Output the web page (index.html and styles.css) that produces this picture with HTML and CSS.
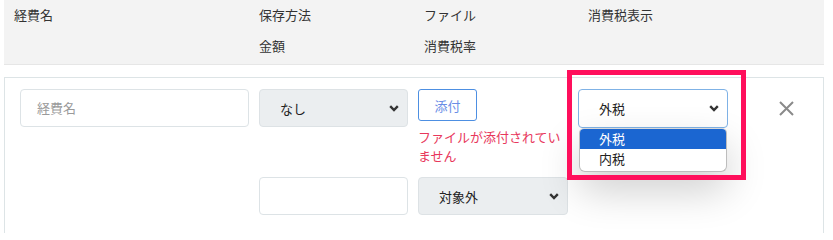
FILE: index.html
```html
<!DOCTYPE html>
<html lang="ja">
<head>
<meta charset="utf-8">
<link rel="stylesheet" href="styles.css">
</head>
<body>
<div class="page">
  <div class="thead">
    <div class="th">経費名</div>
    <div class="th-stack"><div>保存方法</div><div>金額</div></div>
    <div class="th-stack"><div>ファイル</div><div>消費税率</div></div>
    <div class="th">消費税表示</div>
  </div>
  <div class="card">
    <div class="grid">
      <div class="cell r1 c1"><div class="input placeholder">経費名</div></div>
      <div class="cell r1 c2">
        <div class="select gray"><span>なし</span>
          <svg class="chev" width="10" height="7" viewBox="0 0 10 7"><path d="M1.2 1.2 L5 5 L8.8 1.2" fill="none" stroke="#333" stroke-width="2.4"/></svg>
        </div>
      </div>
      <div class="cell r1 c3">
        <button class="btn">添付</button>
        <div class="error">ファイルが添付されていません</div>
      </div>
      <div class="cell r1 c4">
        <div class="select focus"><span>外税</span>
          <svg class="chev" width="10" height="7" viewBox="0 0 10 7"><path d="M1.2 1.2 L5 5 L8.8 1.2" fill="none" stroke="#333" stroke-width="2.4"/></svg>
        </div>
        <div class="menu">
          <div class="opt active">外税</div>
          <div class="opt">内税</div>
        </div>
        <div class="mark"></div>
      </div>
      <div class="cell r1 c5">
        <svg class="close" width="15" height="15" viewBox="0 0 15 15"><path d="M1 1 L14 14 M14 1 L1 14" stroke="#8a8a8a" stroke-width="2" fill="none"/></svg>
      </div>
      <div class="cell r2 c2"><div class="input"></div></div>
      <div class="cell r2 c3">
        <div class="select gray"><span>対象外</span>
          <svg class="chev" width="10" height="7" viewBox="0 0 10 7"><path d="M1.2 1.2 L5 5 L8.8 1.2" fill="none" stroke="#333" stroke-width="2.4"/></svg>
        </div>
      </div>
    </div>
  </div>
</div>
</body>
</html>
```

FILE: styles.css
```css
* { box-sizing: border-box; }
html, body { margin: 0; padding: 0; background: #fff; }
body {
  font-family: "Noto Sans CJK JP", "Noto Sans", sans-serif;
  font-size: 13px;
  color: #333;
}
.page { padding: 0 9px 0 4px; width: 833px; }
.thead {
  display: grid;
  grid-template-columns: 245px 165px 164px 1fr;
  background: #f3f3f3;
  border-bottom: 1px solid #e6e6e6;
  padding: 5px 0 8px 10px;
  line-height: 20px;
}
.th-stack { display: flex; flex-direction: column; gap: 11px; }
.card {
  margin-top: 12px;
  border: 1px solid #dde4e6;
  border-bottom: 0;
  padding: 11px 15px 18px;
}
.grid {
  display: grid;
  grid-template-columns: 229px 149px 150px 150px 1fr;
  column-gap: 10px;
  row-gap: 12px;
}
.r1 { grid-row: 1; }
.r2 { grid-row: 2; }
.c1 { grid-column: 1; }
.c2 { grid-column: 2; }
.c3 { grid-column: 3; }
.c4 { grid-column: 4; position: relative; }
.c5 { grid-column: 5; }
.input {
  height: 38px;
  border: 1px solid #dde3e6;
  border-radius: 4px;
  background: #fff;
  padding-left: 16px;
  line-height: 36px;
}
.placeholder { color: #9a9a9a; }
.select {
  height: 38px;
  border: 1px solid #dde2e5;
  border-radius: 4px;
  display: flex;
  align-items: center;
  justify-content: space-between;
  padding: 0 8px 0 20px;
  color: #222;
}
.select.gray { background: #ebeef0; }
.select.focus { background: #fff; border-color: #7fb2e6; height: 39px; }
.chev { display: block; }
.btn {
  width: 59px;
  height: 32px;
  border: 1px solid #4d8fe2;
  border-radius: 3px;
  background: #fff;
  color: #6a8ee6;
  font-family: inherit;
  font-size: 13px;
  padding: 0;
  display: block;
}
.error {
  margin-top: 6px;
  color: #e8385c;
  line-height: 19px;
}
.menu {
  position: absolute;
  left: 1px;
  top: 39px;
  width: 148px;
  background: #fff;
  border: 1px solid #bdbdbd;
  border-top-color: #d8d8d8;
  border-radius: 5px 5px 6px 6px;
  overflow: hidden;
  padding-bottom: 2px;
  box-shadow: 0 18px 40px rgba(0,0,0,0.2);
}
.opt { height: 20px; line-height: 20px; padding-left: 19px; color: #222; }
.opt.active { background: #1b66d1; color: #fff; }
.mark {
  position: absolute;
  left: -11px;
  top: -19px;
  width: 179px;
  height: 110px;
  border: 5px solid #ff0f5c;
}
.close { display: block; margin: 12px 0 0 41px; }
```
